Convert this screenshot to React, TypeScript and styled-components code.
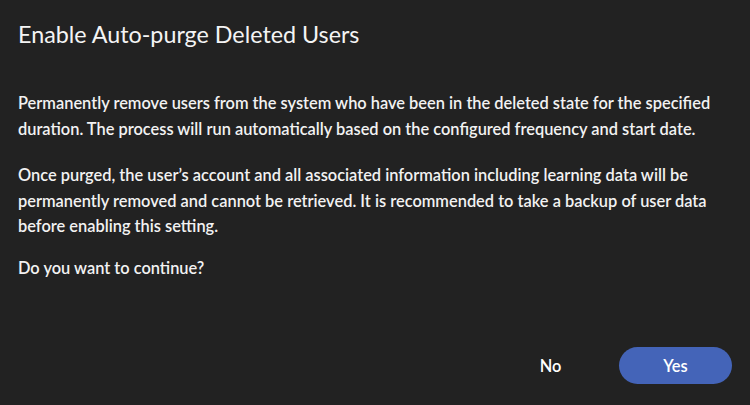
import styled, { createGlobalStyle } from "styled-components";

const GlobalStyle = createGlobalStyle`
	html, body {
		margin: 0;
		padding: 0;
		background: #222222;
	}
	* {
		box-sizing: border-box;
	}
`;

const Dialog = styled.div`
	width: 750px;
	height: 405px;
	display: flex;
	flex-direction: column;
	padding: 18px 18px 21px 18px;
	background: #222222;
	color: #f2f2f2;
	font-family: "Lato", "Open Sans", sans-serif;
`;

const Title = styled.h2`
	margin: 0;
	font-size: 23.3px;
	line-height: 32px;
	font-weight: 400;
	color: #f4f4f4;
`;

const Body = styled.div`
	margin-top: 40px;
	font-size: 16.4px;
	line-height: 25.5px;
	font-weight: 600;
`;

interface ParagraphProps {
	$gap: number;
}

const Paragraph = styled.p<ParagraphProps>`
	margin: 0 0 ${(props) => props.$gap}px 0;
`;

const Footer = styled.div`
	margin-top: auto;
	display: flex;
	justify-content: flex-end;
	gap: 12px;
`;

interface ButtonProps {
	$primary?: boolean;
}

const Button = styled.button<ButtonProps>`
	width: 113px;
	height: 37px;
	border: none;
	border-radius: 19px;
	font-family: inherit;
	font-size: 16.4px;
	font-weight: 600;
	color: #ffffff;
	background: ${(props) => (props.$primary ? "#4464b8" : "transparent")};
	cursor: pointer;
`;

const App = () => {
	return (
		<>
			<GlobalStyle />
			<Dialog>
				<Title>Enable Auto-purge Deleted Users</Title>
				<Body>
					<Paragraph $gap={21}>
						Permanently remove users from the system who have been in the deleted state for the specified
						<br />
						duration. The process will run automatically based on the configured frequency and start date.
					</Paragraph>
					<Paragraph $gap={16}>
						Once purged, the user’s account and all associated information including learning data will be
						<br />
						permanently removed and cannot be retrieved. It is recommended to take a backup of user data
						<br />
						before enabling this setting.
					</Paragraph>
					<Paragraph $gap={0}>Do you want to continue?</Paragraph>
				</Body>
				<Footer>
					<Button>No</Button>
					<Button $primary>Yes</Button>
				</Footer>
			</Dialog>
		</>
	);
};

export default App;
